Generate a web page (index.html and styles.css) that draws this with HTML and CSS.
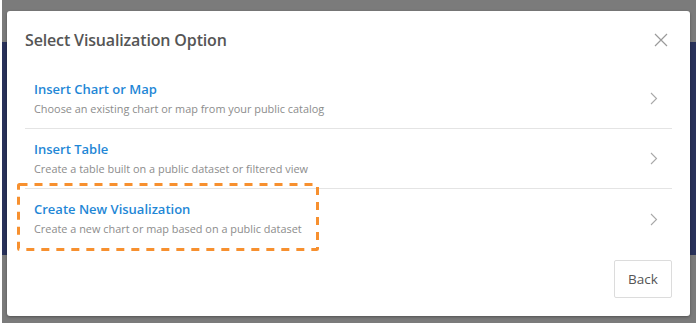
FILE: index.html
```html
<!DOCTYPE html>
<html lang="en">
<head>
<meta charset="utf-8">
<title>Select Visualization Option</title>
<link rel="stylesheet" href="styles.css">
</head>
<body>
<div class="backdrop">
  <div class="modal">
    <div class="modal-header">
      <h2 class="modal-title">Select Visualization Option</h2>
      <button class="close-btn" aria-label="Close">
        <svg width="14" height="14" viewBox="0 0 14 14"><path d="M1 1 L13 13 M13 1 L1 13" stroke="#9a9a9a" stroke-width="1.2" fill="none"/></svg>
      </button>
    </div>
    <ul class="options">
      <li class="option">
        <div class="option-text">
          <div class="option-title">Insert Chart or Map</div>
          <div class="option-desc">Choose an existing chart or map from your public catalog</div>
        </div>
        <svg class="chevron" width="8" height="13" viewBox="0 0 8 13"><path d="M1 1 L6.5 6.5 L1 12" stroke="#a8a8a8" stroke-width="1.1" fill="none"/></svg>
      </li>
      <li class="option">
        <div class="option-text">
          <div class="option-title">Insert Table</div>
          <div class="option-desc">Create a table built on a public dataset or filtered view</div>
        </div>
        <svg class="chevron" width="8" height="13" viewBox="0 0 8 13"><path d="M1 1 L6.5 6.5 L1 12" stroke="#a8a8a8" stroke-width="1.1" fill="none"/></svg>
      </li>
      <li class="option highlighted">
        <div class="option-text">
          <div class="option-title">Create New Visualization</div>
          <div class="option-desc">Create a new chart or map based on a public dataset</div>
        </div>
        <svg class="chevron" width="8" height="13" viewBox="0 0 8 13"><path d="M1 1 L6.5 6.5 L1 12" stroke="#a8a8a8" stroke-width="1.1" fill="none"/></svg>
        <svg class="highlight-box" width="302" height="68" viewBox="0 0 302 68"><rect x="1.5" y="1.5" width="299" height="65" rx="1" fill="none" stroke="#f7902f" stroke-width="3" stroke-dasharray="8 7"/></svg>
      </li>
    </ul>
    <div class="modal-footer">
      <button class="back-btn">Back</button>
    </div>
  </div>
</div>
</body>
</html>
```
FILE: styles.css
```css
* { box-sizing: border-box; }
html, body { margin: 0; padding: 0; background: #ffffff; }
body { font-family: "Open Sans", "Noto Sans", sans-serif; }

.backdrop {
  margin-left: 2px;
  width: 694px;
  height: 323px;
  padding: 11px 6px 0 5px;
  background: linear-gradient(to bottom, #7b7b7b 0, #7b7b7b 42px, #28315a 42px, #28315a 255px, #7b7b7b 255px);
}

.modal {
  width: 683px;
  height: 305px;
  background: #fff;
  border-radius: 3px;
  box-shadow: 0 1px 3px rgba(0,0,0,0.35);
  display: flex;
  flex-direction: column;
}

.modal-header {
  height: 58px;
  display: flex;
  align-items: center;
  justify-content: space-between;
  padding: 0 22px 0 18px;
}
.modal-title {
  margin: 0;
  font-size: 16px;
  font-weight: 600;
  color: #555;
  letter-spacing: -0.15px;
}
.close-btn {
  border: 0;
  background: none;
  padding: 0;
  width: 14px;
  height: 14px;
  display: flex;
}

.options {
  list-style: none;
  margin: 0 18px;
  padding: 0;
}
.option {
  position: relative;
  height: 60px;
  display: flex;
  align-items: center;
  justify-content: space-between;
  padding: 0 14px 0 9px;
  border-bottom: 1px solid #e4e4e4;
}
.option:last-child { border-bottom: 0; }
.option-title {
  font-size: 13px;
  font-weight: 600;
  color: #1f87d6;
  line-height: 19px;
}
.option-desc {
  font-size: 10.9px;
  color: #8c8c8c;
  line-height: 18px;
  margin-top: 1px;
}
.highlight-box {
  position: absolute;
  left: -8px;
  top: -6px;
}

.modal-footer {
  display: flex;
  justify-content: flex-end;
  padding: 11px 18px 0 0;
}
.back-btn {
  width: 58px;
  height: 38px;
  border: 1px solid #dcdcdc;
  border-radius: 2px;
  background: #fff;
  font-family: "Open Sans", "Noto Sans", sans-serif;
  font-size: 13.5px;
  color: #555;
  padding: 0;
}
```
